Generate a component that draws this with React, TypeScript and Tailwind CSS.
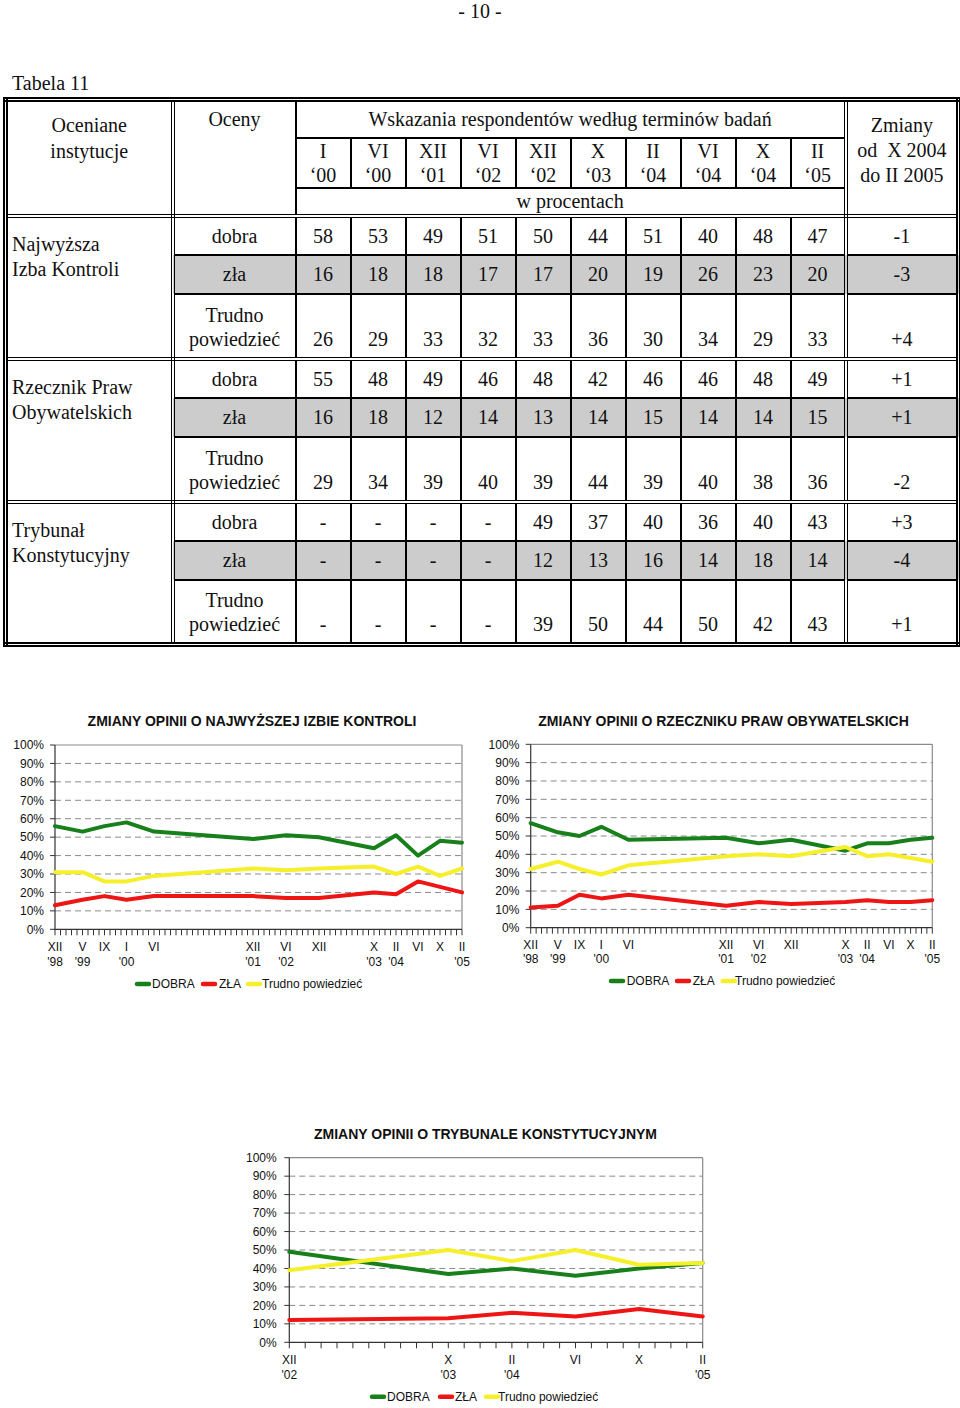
import React from "react";

type Cell = number | string;

interface Block {
  name: string[];
  dobra: Cell[];
  dobraZ: string;
  zla: Cell[];
  zlaZ: string;
  trudno: Cell[];
  trudnoZ: string;
}

const periods = [
  ["I", "‘00"],
  ["VI", "‘00"],
  ["XII", "‘01"],
  ["VI", "‘02"],
  ["XII", "‘02"],
  ["X", "‘03"],
  ["II", "‘04"],
  ["VI", "‘04"],
  ["X", "‘04"],
  ["II", "‘05"],
];

const blocks: Block[] = [
  {
    name: ["Najwyższa", "Izba Kontroli"],
    dobra: [58, 53, 49, 51, 50, 44, 51, 40, 48, 47],
    dobraZ: "-1",
    zla: [16, 18, 18, 17, 17, 20, 19, 26, 23, 20],
    zlaZ: "-3",
    trudno: [26, 29, 33, 32, 33, 36, 30, 34, 29, 33],
    trudnoZ: "+4",
  },
  {
    name: ["Rzecznik Praw", "Obywatelskich"],
    dobra: [55, 48, 49, 46, 48, 42, 46, 46, 48, 49],
    dobraZ: "+1",
    zla: [16, 18, 12, 14, 13, 14, 15, 14, 14, 15],
    zlaZ: "+1",
    trudno: [29, 34, 39, 40, 39, 44, 39, 40, 38, 36],
    trudnoZ: "-2",
  },
  {
    name: ["Trybunał", "Konstytucyjny"],
    dobra: ["-", "-", "-", "-", 49, 37, 40, 36, 40, 43],
    dobraZ: "+3",
    zla: ["-", "-", "-", "-", 12, 13, 16, 14, 18, 14],
    zlaZ: "-4",
    trudno: ["-", "-", "-", "-", 39, 50, 44, 50, 42, 43],
    trudnoZ: "+1",
  },
];

// single inner rule vs Word-style double rule
const cellBase = "border-2 border-black p-0";
const dblR = "[border-right:4px_double_#000]";
const dblL = "[border-left:4px_double_#000]";
const dblB = "[border-bottom:4px_double_#000]";

function InstitutionRows({ block }: { block: Block }) {
  return (
    <>
      <tr className="h-[39px]">
        <td rowSpan={3} className={`${cellBase} ${dblR} ${dblB} align-top pl-[4px] pt-[14px] leading-[25px]`}>
          {block.name[0]}
          <br />
          {block.name[1]}
        </td>
        <td className={`${cellBase} text-center`}>dobra</td>
        {block.dobra.map((v, i) => (
          <td key={i} className={`${cellBase} text-center`}>
            {v}
          </td>
        ))}
        <td className={`${cellBase} ${dblL} text-center`}>{block.dobraZ}</td>
      </tr>
      <tr className="h-[39px] bg-[#cccccc]">
        <td className={`${cellBase} text-center`}>zła</td>
        {block.zla.map((v, i) => (
          <td key={i} className={`${cellBase} text-center`}>
            {v}
          </td>
        ))}
        <td className={`${cellBase} ${dblL} text-center`}>{block.zlaZ}</td>
      </tr>
      <tr className="h-[65px]">
        <td className={`${cellBase} ${dblB} text-center align-bottom pb-[6px] leading-[24px]`}>
          Trudno
          <br />
          powiedzieć
        </td>
        {block.trudno.map((v, i) => (
          <td key={i} className={`${cellBase} ${dblB} text-center align-bottom pb-[6px] leading-[24px]`}>
            {v}
          </td>
        ))}
        <td className={`${cellBase} ${dblL} ${dblB} text-center align-bottom pb-[6px] leading-[24px]`}>
          {block.trudnoZ}
        </td>
      </tr>
    </>
  );
}

function OpinionTable() {
  return (
    <table className="ml-[3px] border-collapse table-fixed w-[953px] [border:5px_double_#000] text-[20px] leading-[24px]">
      <colgroup>
        <col className="w-[167px]" />
        <col className="w-[123px]" />
        {periods.map((_, i) => (
          <col key={i} className="w-[55px]" />
        ))}
        <col className="w-[113px]" />
      </colgroup>
      <tbody>
        <tr className="h-[38px]">
          <td rowSpan={3} className={`${cellBase} ${dblR} ${dblB} align-top text-center pt-[10px] leading-[26px]`}>
            Oceniane
            <br />
            instytucje
          </td>
          <td rowSpan={3} className={`${cellBase} ${dblB} align-top text-center pt-[5px]`}>
            Oceny
          </td>
          <td colSpan={10} className={`${cellBase} text-center`}>
            Wskazania respondentów według terminów badań
          </td>
          <td rowSpan={3} className={`${cellBase} ${dblL} ${dblB} align-top text-center pt-[11px] leading-[25px]`}>
            Zmiany
            <br />
            od&nbsp; X 2004
            <br />
            do II 2005
          </td>
        </tr>
        <tr className="h-[50px]">
          {periods.map((p, i) => (
            <td key={i} className={`${cellBase} text-center`}>
              {p[0]}
              <br />
              {p[1]}
            </td>
          ))}
        </tr>
        <tr className="h-[28px]">
          <td colSpan={10} className={`${cellBase} ${dblB} text-center`}>
            w procentach
          </td>
        </tr>
        {blocks.map((b, i) => (
          <InstitutionRows key={i} block={b} />
        ))}
      </tbody>
    </table>
  );
}

interface ChartProps {
  w: number;
  h: number;
  title: string;
  titleX: number;
  titleY: number;
  l: number;
  t: number;
  r: number;
  b: number;
  months: number;
  xs: number[];
  labels: { m: number; a: string; b?: string }[];
  dobra: number[];
  zla: number[];
  trudno: number[];
  yLabRight: number;
  lab1Y: number;
  lab2Y: number;
  legendY: number;
  legendX: number[];
}

const GREEN = "#17801a";
const RED = "#ee1515";
const YELLOW = "#f6ef2c";

function LineChart(p: ChartProps) {
  const x = (m: number) => p.l + ((p.r - p.l) * m) / p.months;
  const y = (v: number) => p.b - ((p.b - p.t) * v) / 100;
  const path = (vals: number[]) => vals.map((v, i) => `${i ? "L" : "M"}${x(p.xs[i]).toFixed(1)},${y(v).toFixed(1)}`).join(" ");
  const grid = [10, 20, 30, 40, 50, 60, 70, 80, 90];
  const ticks = Array.from({ length: p.months + 1 }, (_, i) => i);

  return (
    <svg width={p.w} height={p.h} className="block shrink-0" fontFamily="'Liberation Sans', Arial, sans-serif" fill="#111">
      <text x={p.titleX} y={p.titleY} textAnchor="middle" fontSize={14} fontWeight={700}>
        {p.title}
      </text>

      {grid.map((g) => (
        <line key={g} x1={p.l} x2={p.r} y1={y(g)} y2={y(g)} stroke="#8a8a8a" strokeWidth={1} strokeDasharray="6 4" />
      ))}
      <line x1={p.l} x2={p.r} y1={p.t} y2={p.t} stroke="#8a8a8a" strokeWidth={1.2} />
      <line x1={p.r} x2={p.r} y1={p.t} y2={p.b} stroke="#8a8a8a" strokeWidth={1.2} />
      <line x1={p.l} x2={p.l} y1={p.t} y2={p.b + 0.5} stroke="#333" strokeWidth={1.2} />
      <line x1={p.l} x2={p.r} y1={p.b} y2={p.b} stroke="#333" strokeWidth={1.2} />
      {[0, ...grid, 100].map((g) => (
        <line key={g} x1={p.l - 5} x2={p.l} y1={y(g)} y2={y(g)} stroke="#333" strokeWidth={1} />
      ))}
      {ticks.map((m) => (
        <line key={m} x1={x(m)} x2={x(m)} y1={p.b} y2={p.b + 6} stroke="#333" strokeWidth={1} />
      ))}

      {[0, ...grid, 100].map((g) => (
        <text key={g} x={p.yLabRight} y={y(g) + 4.3} textAnchor="end" fontSize={12}>
          {g}%
        </text>
      ))}

      {p.labels.map((lb, i) => (
        <g key={i}>
          <text x={x(lb.m)} y={p.lab1Y} textAnchor="middle" fontSize={12}>
            {lb.a}
          </text>
          {lb.b && (
            <text x={x(lb.m)} y={p.lab2Y} textAnchor="middle" fontSize={12}>
              {lb.b}
            </text>
          )}
        </g>
      ))}

      <g fill="none" strokeWidth={4} strokeLinejoin="round" strokeLinecap="round">
        <path d={path(p.dobra)} stroke={GREEN} />
        <path d={path(p.zla)} stroke={RED} />
        <path d={path(p.trudno)} stroke={YELLOW} />
      </g>

      {/* legend */}
      <g strokeWidth={4.5} strokeLinecap="round">
        <line x1={p.legendX[0] + 2} x2={p.legendX[0] + 14} y1={p.legendY} y2={p.legendY} stroke={GREEN} />
        <line x1={p.legendX[2] + 2} x2={p.legendX[2] + 14} y1={p.legendY} y2={p.legendY} stroke={RED} />
        <line x1={p.legendX[4] + 2} x2={p.legendX[4] + 14} y1={p.legendY} y2={p.legendY} stroke={YELLOW} />
      </g>
      <text x={p.legendX[1]} y={p.legendY + 4.3} fontSize={12}>
        DOBRA
      </text>
      <text x={p.legendX[3]} y={p.legendY + 4.3} fontSize={12}>
        ZŁA
      </text>
      <text x={p.legendX[5]} y={p.legendY + 4.3} fontSize={12}>
        Trudno powiedzieć
      </text>
    </svg>
  );
}

const longXs = [0, 5, 9, 13, 18, 36, 42, 48, 58, 62, 66, 70, 74];
const longLabels = [
  { m: 0, a: "XII", b: "'98" },
  { m: 5, a: "V", b: "'99" },
  { m: 9, a: "IX" },
  { m: 13, a: "I", b: "'00" },
  { m: 18, a: "VI" },
  { m: 36, a: "XII", b: "'01" },
  { m: 42, a: "VI", b: "'02" },
  { m: 48, a: "XII" },
  { m: 58, a: "X", b: "'03" },
  { m: 62, a: "II", b: "'04" },
  { m: 66, a: "VI" },
  { m: 70, a: "X" },
  { m: 74, a: "II", b: "'05" },
];

export default function App() {
  return (
    <div className="w-[960px] h-[1408px] bg-white text-[#111] font-['Liberation_Serif','Times_New_Roman',serif] overflow-hidden">
      <div className="text-center text-[20px] leading-[22px]">- 10 -</div>
      <div className="mt-[49px] pl-[12px] text-[20px] leading-[24px]">Tabela 11</div>
      <div className="mt-[2px]">
        <OpinionTable />
      </div>

      <div className="mt-[53px] flex">
        <LineChart
          w={480}
          h={300}
          title="ZMIANY OPINII O NAJWYŻSZEJ IZBIE KONTROLI"
          titleX={252}
          titleY={26}
          l={55}
          t={45}
          r={462}
          b={229.3}
          months={74}
          xs={longXs}
          labels={longLabels}
          dobra={[56, 53, 56, 58, 53, 49, 51, 50, 44, 51, 40, 48, 47]}
          zla={[13, 16, 18, 16, 18, 18, 17, 17, 20, 19, 26, 23, 20]}
          trudno={[31, 31, 26, 26, 29, 33, 32, 33, 34, 30, 34, 29, 33]}
          yLabRight={44}
          lab1Y={251}
          lab2Y={266}
          legendY={284}
          legendX={[135, 152, 201, 219, 246, 262]}
        />
        <LineChart
          w={480}
          h={300}
          title="ZMIANY OPINII O RZECZNIKU PRAW OBYWATELSKICH"
          titleX={243.5}
          titleY={26}
          l={50.7}
          t={44.3}
          r={452.3}
          b={227.7}
          months={74}
          xs={longXs}
          labels={longLabels}
          dobra={[57, 52, 50, 55, 48, 49, 46, 48, 42, 46, 46, 48, 49]}
          zla={[11, 12, 18, 16, 18, 12, 14, 13, 14, 15, 14, 14, 15]}
          trudno={[32, 36, 32, 29, 34, 39, 40, 39, 44, 39, 40, 38, 36]}
          yLabRight={39.3}
          lab1Y={248.6}
          lab2Y={262.6}
          legendY={281}
          legendX={[129, 146.7, 195, 212.7, 240.7, 255]}
        />
      </div>

      <div className="mt-[110px] pl-[230px]">
        <LineChart
          w={500}
          h={298}
          title="ZMIANY OPINII O TRYBUNALE KONSTYTUCYJNYM"
          titleX={255.5}
          titleY={29}
          l={59.3}
          t={47.7}
          r={472.7}
          b={232.3}
          months={26}
          xs={[0, 10, 14, 18, 22, 26]}
          labels={[
            { m: 0, a: "XII", b: "'02" },
            { m: 10, a: "X", b: "'03" },
            { m: 14, a: "II", b: "'04" },
            { m: 18, a: "VI" },
            { m: 22, a: "X" },
            { m: 26, a: "II", b: "'05" },
          ]}
          dobra={[49, 37, 40, 36, 40, 43]}
          zla={[12, 13, 16, 14, 18, 14]}
          trudno={[39, 50, 44, 50, 42, 43]}
          yLabRight={46.7}
          lab1Y={253.6}
          lab2Y={268.6}
          legendY={286.7}
          legendX={[140, 157, 208, 225, 254, 268]}
        />
      </div>
    </div>
  );
}
